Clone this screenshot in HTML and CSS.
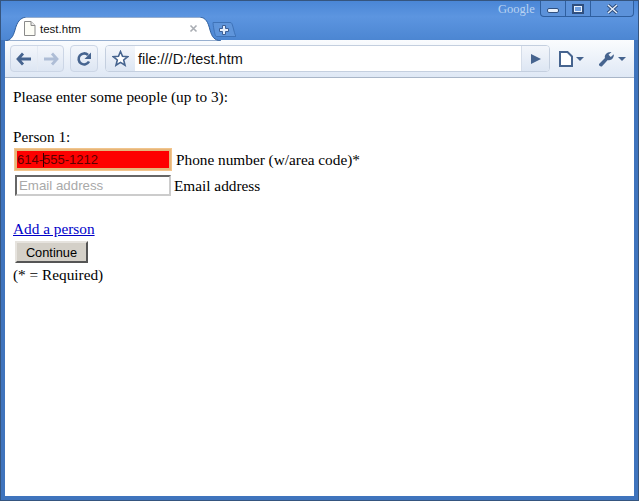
FILE: index.html
```html
<!DOCTYPE html>
<html lang="en">
<head>
    <meta charset="UTF-8">
    <title>test.htm</title>
    <link rel="stylesheet" href="styles.css">
</head>
<body>
    <div class="window">
        <div class="titlebar">
            <div class="tab">
                <svg class="tab-shape" width="216" height="24" viewBox="0 0 216 24">
                    <path d="M0 24 C6 23 8 20 10 13 C12 5 15 1 21 0 L195 0 C201 1 203 5 205 13 C207 20 209 23 216 24 Z" fill="#fff" stroke="#2f5f9f" stroke-width="1"/>
                </svg>
                <svg class="tab-icon" width="13" height="15" viewBox="0 0 13 15">
                    <path d="M1.500 .5 H8 L12 4.500 V14.500 H1.500 Z" fill="#fdfdf6" stroke="#8a8a8a"/>
                    <path d="M8 .5 V4.500 H12" fill="#e8e8e8" stroke="#8a8a8a"/>
                </svg>
                <span class="tab-title">test.htm</span>
                <svg class="tab-close" width="9" height="9" viewBox="0 0 9 9">
                    <path d="M1.500 1.500 L7.500 7.500 M7.500 1.500 L1.500 7.500" stroke="#a9adb3" stroke-width="1.600"/>
                </svg>
            </div>
            <div class="newtab">
                <svg width="24" height="15" viewBox="0 0 24 15">
                    <path d="M1 .5 H18 C20 .5 20 2 21 5 C22 9 23 13 24 14.500 H5 C3 14.500 3 12 2 8 C1.500 5 1 2 1 .5 Z" fill="#5f95db" stroke="#3f73b8"/>
                    <path d="M10.500 3.500 H13.500 V6.500 H16.500 V9.500 H13.500 V12.500 H10.500 V9.500 H7.500 V6.500 H10.500 Z" fill="#e6eefa" stroke="#3c5f96"/>
                </svg>
            </div>
            <span class="brand">Google</span>
            <div class="controls">
                <div class="ctl ctl-min"><span class="min-glyph"></span></div>
                <div class="ctl ctl-max"><span class="max-glyph"></span></div>
                <div class="ctl ctl-close">
                    <svg width="13" height="10" viewBox="0 0 13 10">
                        <path d="M2 1 L11 9 M11 1 L2 9" stroke="#2f4f7f" stroke-width="3.400"/>
                        <path d="M2 1 L11 9 M11 1 L2 9" stroke="#e8f0fb" stroke-width="1.400"/>
                    </svg>
                </div>
            </div>
        </div>

        <div class="toolbar">
            <div class="btn-group nav-group">
                <div class="nav-btn">
                    <svg width="16" height="14" viewBox="0 0 16 14">
                        <path d="M7 1.500 L2 7 L7 12.500 M2.500 7 H15" fill="none" stroke="#46648f" stroke-width="2.800"/>
                    </svg>
                </div>
                <div class="nav-btn">
                    <svg width="16" height="14" viewBox="0 0 16 14">
                        <path d="M9 1.500 L14 7 L9 12.500 M13.500 7 H1" fill="none" stroke="#aebdd6" stroke-width="2.800"/>
                    </svg>
                </div>
            </div>
            <div class="btn-group reload-btn">
                <svg width="16" height="16" viewBox="0 0 16 16">
                    <path d="M13 10.500 A5.500 5.500 0 1 1 12 4" fill="none" stroke="#46648f" stroke-width="2.600"/>
                    <path d="M15 1.500 V8 H8.500 Z" fill="#46648f"/>
                </svg>
            </div>
            <div class="omnibox">
                <div class="star">
                    <svg width="17" height="17" viewBox="0 0 17 17">
                        <path d="M8.500 1.500 L10.500 6.300 L15.700 6.700 L11.700 10 L13 15.200 L8.500 12.400 L4 15.200 L5.300 10 L1.300 6.700 L6.500 6.300 Z" fill="#fff" stroke="#46648f" stroke-width="1.600"/>
                    </svg>
                </div>
                <span class="url">file:///D:/test.htm</span>
                <div class="go">
                    <svg width="10" height="12" viewBox="0 0 10 12">
                        <path d="M0 1 L10 6 L0 11 Z" fill="#46648f"/>
                    </svg>
                </div>
            </div>
            <div class="tool">
                <svg width="14" height="16" viewBox="0 0 14 16">
                    <path d="M1 1 H8.500 L13 5.500 V15 H1 Z" fill="#fff" stroke="#46648f" stroke-width="2"/>
                </svg>
                <span class="caret"></span>
            </div>
            <div class="tool">
                <svg width="17" height="16" viewBox="0 0 17 16">
                    <path d="M1 13 L7 7 C6 4 9 .5 13.500 1 L10.500 3.800 L12.800 6 L15.800 3.200 C16.300 7 13 10 9.800 9 L3.800 15.500 C2.500 16 .5 14.500 1 13 Z" fill="#46648f"/>
                </svg>
                <span class="caret"></span>
            </div>
        </div>

        <div class="content">
            <p class="line">Please enter some people (up to 3):</p>
            <p class="line person">Person 1:</p>
            <div class="field">
                <input class="input input-error" type="text" value="614-555-1212">
                <span class="text-caret"></span>
                <span class="field-label">Phone number (w/area code)*</span>
            </div>
            <div class="field field-next">
                <input class="input" type="text" placeholder="Email address">
                <span class="field-label field-label-tight">Email address</span>
            </div>
            <p class="line add"><a href="#">Add a person</a></p>
            <button class="continue" type="button">Continue</button>
            <p class="line">(* = Required)</p>
        </div>
    </div>
</body>
</html>
```

FILE: styles.css
```css
* {
    margin: 0;
    padding: 0;
    box-sizing: border-box;
}

html, body {
    height: 100%;
    overflow: hidden;
}

.window {
    height: 501px;
    display: flex;
    flex-direction: column;
    background: #3f74bd;
    border: 1px solid #35557f;
    padding: 0 3px 4px 3px;
}

/* tab strip */
.titlebar {
    height: 39px;
    margin: 0 -3px;
    padding-left: 6px;
    display: flex;
    position: relative;
    background: linear-gradient(#4a86d6, #5c95e0 40%, #4c86d2);
}

.tab {
    width: 204px;
    height: 23px;
    margin-top: 16px;
    position: relative;
    display: flex;
    align-items: center;
    padding-left: 16px;
    padding-right: 13px;
}

.tab-shape {
    position: absolute;
    left: -2px;
    top: 0;
}

.tab-icon, .tab-title, .tab-close {
    position: relative;
}

.tab-title {
    margin-left: 4px;
    flex: 1;
    font: 11.500px "Liberation Sans", Arial, sans-serif;
    color: #111;
}

.newtab {
    margin: 21px 0 0 1px;
    height: 15px;
    display: flex;
}

.brand {
    position: absolute;
    left: 497px;
    top: 1px;
    font: 12.500px "Liberation Serif", serif;
    color: #b9d2f2;
}

.controls {
    position: absolute;
    right: 4px;
    top: 0;
    height: 16px;
    display: flex;
    border: 1px solid #2f5f9f;
    border-top: 0;
    border-radius: 0 0 4px 4px;
    background: #5c92da;
}

.ctl {
    display: flex;
    align-items: center;
    justify-content: center;
    border-right: 1px solid #2f5f9f;
    width: 25px;
}

.ctl-close {
    width: 42px;
    border-right: 0;
}

.min-glyph {
    width: 12px;
    height: 5px;
    margin-top: 4px;
    background: #e8f0fb;
    border: 1px solid #2f4f7f;
    border-radius: 2px;
}

.max-glyph {
    width: 12px;
    height: 10px;
    background: #6f9fe0;
    border: 2px solid #2f4f7f;
    box-shadow: inset 0 0 0 1px #e8f0fb;
}

/* toolbar */
.toolbar {
    height: 38px;
    margin: 0 1px;
    display: flex;
    align-items: center;
    gap: 6px;
    padding: 0 5px 0 5px;
    background: linear-gradient(#fafcfe, #dfe8f5);
    border-bottom: 1px solid #a9b6c8;
}

.btn-group {
    height: 27px;
    border: 1px solid #ccd6e6;
    border-radius: 4px;
    background: linear-gradient(#f3f6fb, #dde6f3);
    display: flex;
    align-items: center;
    justify-content: center;
}

.nav-group {
    width: 54px;
}

.nav-btn {
    width: 50%;
    height: 100%;
    display: flex;
    align-items: center;
    justify-content: center;
}

.nav-btn + .nav-btn {
    border-left: 1px solid #e4eaf3;
}

.reload-btn {
    width: 28px;
}

.omnibox {
    width: 445px;
    height: 27px;
    margin-left: 1px;
    display: flex;
    align-items: center;
    border: 1px solid #c4cfdf;
    border-radius: 4px;
    background: #fff;
    overflow: hidden;
}

.star {
    width: 29px;
    height: 100%;
    display: flex;
    align-items: center;
    justify-content: center;
    background: linear-gradient(#f3f6fb, #dde6f3);
}

.url {
    flex: 1;
    padding-left: 3px;
    font: 14.500px "Liberation Sans", Arial, sans-serif;
    color: #111;
}

.go {
    width: 28px;
    height: 100%;
    display: flex;
    align-items: center;
    justify-content: center;
    background: linear-gradient(#f3f6fb, #dde6f3);
    border-left: 1px solid #d5dde9;
}

.tool {
    width: 30px;
    display: flex;
    align-items: center;
    gap: 3px;
    margin-left: 3px;
    flex: none;
}

.caret {
    width: 0;
    height: 0;
    border: 4px solid transparent;
    border-top-color: #46648f;
    border-bottom: 0;
}

/* page */
.content {
    flex: 1;
    margin: 0 1px;
    padding: 9px 8px;
    background: #fff;
    font: 15.300px/18px "Liberation Serif", "Times New Roman", serif;
    color: #000;
}

.line {
    line-height: 20px;
}

.person {
    margin-top: 20px;
}

.field {
    display: flex;
    align-items: center;
    gap: 4px;
    margin-left: 2px;
    height: 25px;
    position: relative;
}

.field-next {
    margin-top: 1px;
}

.input {
    width: 156px;
    height: 21px;
    padding: 0 2px;
    font: 13.300px "Liberation Sans", Arial, sans-serif;
    background: #fff;
    border: 2px solid;
    border-color: #666 #ccc #ccc #666;
    outline: none;
}

.input::placeholder {
    color: #a9a9a9;
}

.input-error {
    padding: 0;
    font-size: 13px;
    background: #fe0000;
    color: #5a0000;
    border: 2px solid #e5b67a;
    outline: 1px solid #f2c48c;
    margin-right: 1px;
}

.text-caret {
    position: absolute;
    left: 28px;
    top: 6px;
    width: 1px;
    height: 14px;
    background: #300;
}

.field-label-tight {
    margin-left: -1px;
}

.add {
    margin-top: 21px;
}

.add a {
    color: #0000c8;
}

.continue {
    display: block;
    width: 73px;
    height: 22px;
    margin: 2px 0 2px 2px;
    font: 12.800px "Liberation Sans", Arial, sans-serif;
    color: #000;
    background: #d4d0c8;
    border: 2px solid;
    border-color: #e6e3de #555 #555 #e6e3de;
}
```
